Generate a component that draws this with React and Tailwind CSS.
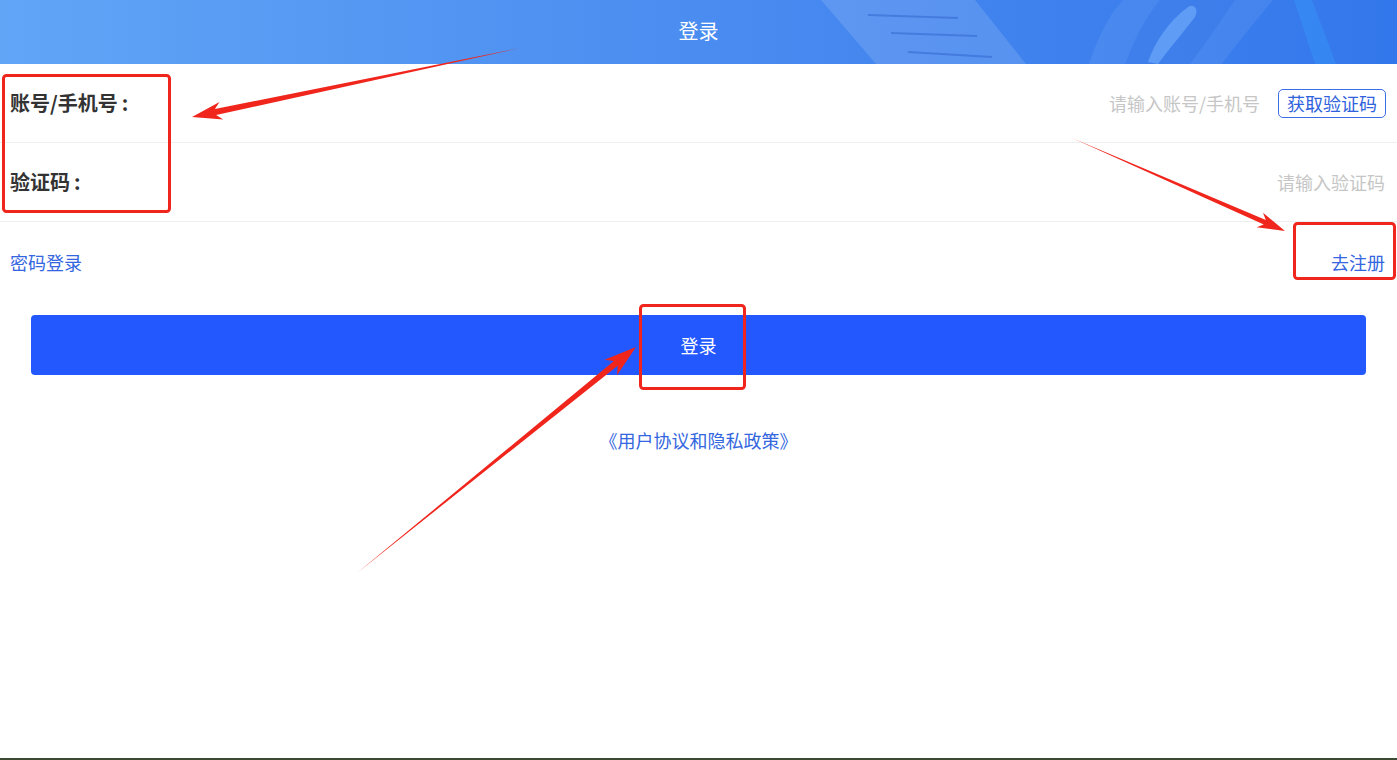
import React from "react";

// hand-drawn style arrow: thin tail, thicker shaft, pointed head
function arrowPoints(tail, tip, headLen, headHalf, shaft) {
  const dx = tip[0] - tail[0];
  const dy = tip[1] - tail[1];
  const len = Math.hypot(dx, dy);
  const ux = dx / len;
  const uy = dy / len;
  const nx = -uy;
  const ny = ux;
  const bx = tip[0] - ux * headLen;
  const by = tip[1] - uy * headLen;
  const cx = tip[0] - ux * headLen * 1.25;
  const cy = tip[1] - uy * headLen * 1.25;
  const pts = [
    [tail[0], tail[1]],
    [bx + (nx * shaft) / 2, by + (ny * shaft) / 2],
    [cx + nx * headHalf, cy + ny * headHalf],
    [tip[0], tip[1]],
    [cx - nx * headHalf, cy - ny * headHalf],
    [bx - (nx * shaft) / 2, by - (ny * shaft) / 2],
  ];
  return pts.map((p) => p[0].toFixed(1) + "," + p[1].toFixed(1)).join(" ");
}

const arrows = [
  arrowPoints([520, 48], [192, 117], 24, 9, 6),
  arrowPoints([1072, 138], [1285, 231], 22, 8, 5),
  arrowPoints([357, 573], [636, 347], 26, 10, 6),
];

function Annotations() {
  return (
    <svg className="absolute inset-0 pointer-events-none" width="1397" height="760">
      <rect x="3.5" y="75.5" width="166" height="136" rx="3" fill="none" stroke="#f0261d" strokeWidth="3" />
      <rect x="1294.5" y="223.5" width="100" height="55" rx="3" fill="none" stroke="#f0261d" strokeWidth="3" />
      <rect x="640.5" y="305.5" width="104" height="83" rx="3" fill="none" stroke="#f0261d" strokeWidth="3" />
      {arrows.map((p, i) => (
        <polygon key={i} points={p} fill="#f0261d" />
      ))}
    </svg>
  );
}

function HeaderDecor() {
  return (
    <svg className="absolute inset-0" width="1397" height="64">
      <polygon points="821,0 975,0 1026,64 876,64" fill="#ffffff" opacity="0.13" />
      <line x1="868" y1="15" x2="958" y2="18" stroke="#2a5ec8" strokeWidth="2" opacity="0.45" />
      <line x1="891" y1="33" x2="977" y2="36" stroke="#2a5ec8" strokeWidth="2" opacity="0.45" />
      <line x1="908" y1="52" x2="992" y2="57" stroke="#2a5ec8" strokeWidth="2" opacity="0.45" />
      <path d="M1089,64 C1098,38 1108,16 1123,0 L1273,0 C1255,22 1236,44 1222,64 Z" fill="#ffffff" opacity="0.07" />
      <path d="M1125,64 C1135,38 1145,18 1160,0 L1235,0 C1220,22 1205,44 1190,64 Z" fill="#2f6fe6" opacity="0.35" />
      <path d="M1148,62 C1155,42 1168,22 1188,7 C1194,3 1199,9 1195,17 C1182,34 1168,50 1158,64 Z" fill="#7fbaff" opacity="0.5" />
      <polygon points="1294,0 1312,0 1336,64 1315,64" fill="#3aa0ff" opacity="0.35" />
    </svg>
  );
}

export default function App() {
  return (
    <div
      className="relative h-[760px] w-full bg-white border-b-2 border-[#3c4a34] overflow-hidden"
      style={{ fontFamily: '"Noto Sans CJK SC", "Noto Sans", sans-serif' }}
    >
      <div className="relative h-16 bg-gradient-to-r from-[#60a5f6] via-[#4a8cf0] to-[#3377ec] flex items-center justify-center">
        <HeaderDecor />
        <span className="relative text-white text-[20px] -mt-[2px]">登录</span>
      </div>

      <div className="h-[79px] flex items-center justify-between pl-[10px] pr-[11px] border-b border-[#eeeeee]">
        <span className="text-[20px] font-bold text-[#333333]">
          账号/手机号<span className="ml-[4px]">:</span>
        </span>
        <div className="flex items-center gap-[18px]">
          <span className="text-[18px] text-[#c6c6c6]">请输入账号/手机号</span>
          <button className="h-[29px] px-[8px] border border-[#3b6ee6] rounded-[5px] text-[18px] leading-none text-[#2f62dc]">
            获取验证码
          </button>
        </div>
      </div>

      <div className="h-[79px] flex items-center justify-between pl-[10px] pr-[12px] border-b border-[#eeeeee]">
        <span className="text-[20px] font-bold text-[#333333]">
          验证码<span className="ml-[4px]">:</span>
        </span>
        <span className="text-[18px] text-[#c6c6c6]">请输入验证码</span>
      </div>

      <div className="h-[80px] flex items-center justify-between pl-[10px] pr-[12px]">
        <span className="text-[18px] text-[#3466e0]">密码登录</span>
        <span className="text-[18px] text-[#3466e0]">去注册</span>
      </div>

      <div className="mt-[13px] mx-[31px] h-[60px] rounded-[4px] bg-[#2458ff] flex items-center justify-center">
        <span className="text-white text-[18px]">登录</span>
      </div>

      <div className="mt-[53px] flex justify-center">
        <span className="text-[18px] leading-[24px] text-[#3466e0]">《用户协议和隐私政策》</span>
      </div>

      <Annotations />
    </div>
  );
}
